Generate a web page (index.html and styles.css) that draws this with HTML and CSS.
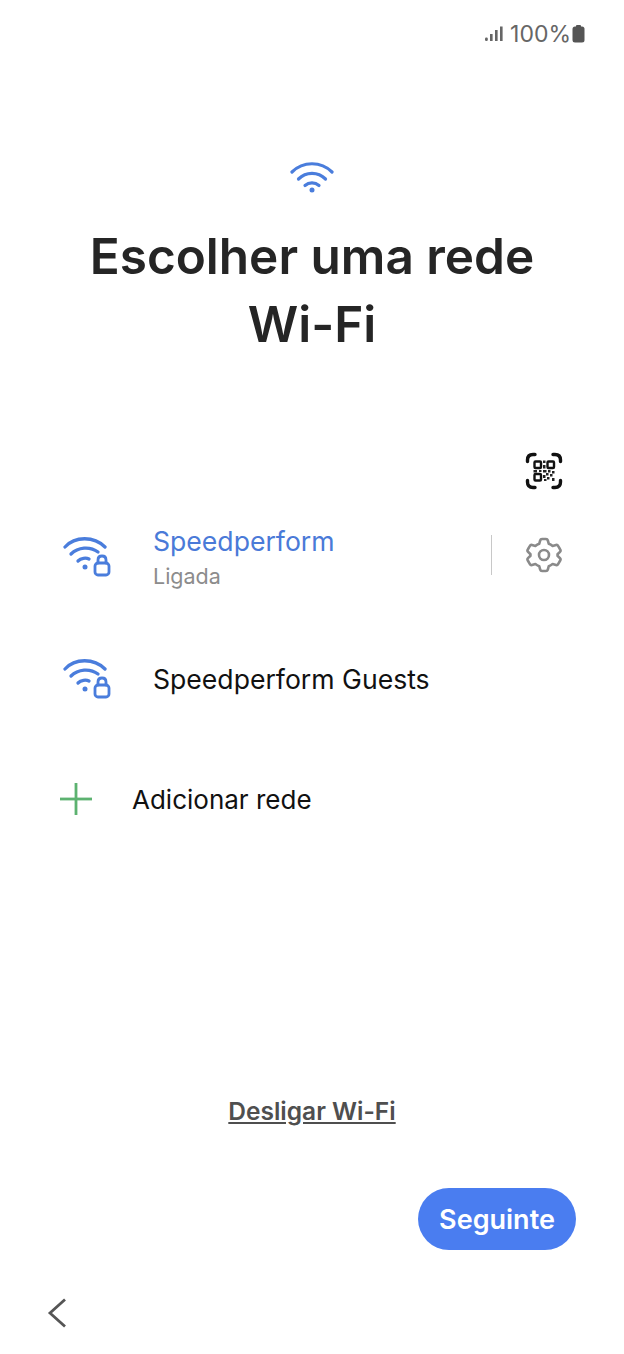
FILE: index.html
```html
<!DOCTYPE html>
<html lang="pt-BR">
<head>
  <meta charset="UTF-8">
  <title>Escolher uma rede Wi-Fi</title>
  <meta name="viewport" content="width=device-width, initial-scale=1.0">
  <link rel="stylesheet" href="styles.css">
</head>
<body>
  <div class="status">
    <svg class="signal" width="18" height="16" viewBox="0 0 18 16" fill="#666">
      <rect x="0" y="11.500" width="2.800" height="3.500" rx="1.200"/>
      <rect x="5" y="8" width="2.600" height="7"/>
      <rect x="10" y="4" width="2.600" height="11"/>
      <rect x="15" y="0.500" width="2.600" height="14.500"/>
    </svg>
    <span class="battery-text">100%</span>
    <svg class="battery" width="13" height="18" viewBox="0 0 13 18" fill="#555">
      <rect x="4" y="0" width="5" height="3" rx="1"/>
      <rect x="0.500" y="1.500" width="12" height="16" rx="2.500"/>
    </svg>
  </div>

  <main>
    <div class="top-icon">
      <svg width="44" height="34" viewBox="0 0 44 34" fill="none" stroke="#4a7ddc" stroke-width="3.200" stroke-linecap="round">
        <path d="M2 13 C13 2 31 2 42 13"/>
        <path d="M8.500 20 C16 12.500 28 12.500 35.500 20"/>
        <path d="M15 26.500 C19 23 25 23 29 26.500"/>
        <circle cx="22" cy="31" r="2.500" fill="#4a7ddc" stroke="none"/>
      </svg>
    </div>
    <h1>Escolher uma rede<br>Wi-Fi</h1>

    <div class="qr-row">
      <svg width="38" height="38" viewBox="0 0 38 38" fill="none" stroke="#111" stroke-width="3.400" stroke-linecap="round">
        <path d="M2.500 9.500 V8 Q2.500 2.500 8 2.500 H10"/>
        <path d="M28 2.500 H30 Q35.500 2.500 35.500 8 V9.500"/>
        <path d="M2.500 28.500 V30 Q2.500 35.500 8 35.500 H10"/>
        <path d="M35.500 28.500 V30 Q35.500 35.500 30 35.500 H28"/>
        <g stroke-width="2.400" stroke-linecap="butt">
          <rect x="9.500" y="9.500" width="6.500" height="6.500" rx="1"/>
          <rect x="22.500" y="9.500" width="6.500" height="6.500" rx="1"/>
          <rect x="9.500" y="22" width="6.500" height="6.500" rx="1"/>
        </g>
        <g fill="#222" stroke="none">
          <rect x="18" y="8.500" width="2.500" height="2.500"/>
          <rect x="18" y="13" width="2.500" height="3.500"/>
          <rect x="18" y="18" width="3.500" height="2.500"/>
          <rect x="8.500" y="18" width="3.500" height="2.500"/>
          <rect x="14" y="18" width="2.500" height="2"/>
          <rect x="23" y="18" width="2.500" height="2.500"/>
          <rect x="27" y="19" width="2.500" height="2.500"/>
          <rect x="21" y="21" width="2.500" height="2.500"/>
          <rect x="25" y="22" width="2.500" height="2.500"/>
          <rect x="18" y="23" width="2.500" height="3"/>
          <rect x="22" y="25" width="2.500" height="2.500"/>
          <rect x="27" y="26" width="2.500" height="3"/>
          <rect x="19" y="27" width="2.500" height="2"/>
        </g>
      </svg>
    </div>

    <div class="network connected">
      <svg class="wifi-lock" width="48" height="42" viewBox="0 0 48 42" fill="none" stroke="#4a7ddc" stroke-width="3.300" stroke-linecap="round">
        <path d="M2 12 C12 1 31 1 42 12"/>
        <path d="M8 19 C15 12 27 11 35 17"/>
        <path d="M15 26 C18 23 23 22.500 26 24"/>
        <circle cx="22" cy="32" r="2.500" fill="#4a7ddc" stroke="none"/>
        <rect x="32" y="28" width="14" height="12" rx="3" stroke-width="2.800"/>
        <path d="M35 28 V25 Q35 21 39 21 Q43 21 43 25 V28" stroke-width="2.800"/>
      </svg>
      <div class="network-text">
        <div class="network-name">Speedperform</div>
        <div class="network-state">Ligada</div>
      </div>
      <div class="divider"></div>
      <svg class="gear" width="36" height="36" viewBox="0 0 36 36" fill="none" stroke="#8a8a8a" stroke-width="2.600" stroke-linejoin="round">
        <path d="M16 2 H20 Q21.400 2 21.800 3.400 L22.800 6.800 Q24.800 7.600 26.600 9 L30 8 Q31.400 7.600 32.100 8.900 L34.200 12.500 Q35 13.800 34 14.800 L31.500 17.200 Q31.800 18 31.500 18.800 L34 21.200 Q35 22.200 34.200 23.500 L32.100 27.100 Q31.400 28.400 30 28 L26.600 27 Q24.800 28.400 22.800 29.200 L21.800 32.600 Q21.400 34 20 34 H16 Q14.600 34 14.200 32.600 L13.200 29.200 Q11.200 28.400 9.400 27 L6 28 Q4.600 28.400 3.900 27.100 L1.800 23.500 Q1 22.200 2 21.200 L4.500 18.800 Q4.200 18 4.500 17.200 L2 14.800 Q1 13.800 1.800 12.500 L3.900 8.900 Q4.600 7.600 6 8 L9.400 9 Q11.200 7.600 13.200 6.800 L14.200 3.400 Q14.600 2 16 2 Z"/>
        <circle cx="18" cy="18" r="5"/>
      </svg>
    </div>

    <div class="network">
      <svg class="wifi-lock" width="48" height="42" viewBox="0 0 48 42" fill="none" stroke="#4a7ddc" stroke-width="3.300" stroke-linecap="round">
        <path d="M2 12 C12 1 31 1 42 12"/>
        <path d="M8 19 C15 12 27 11 35 17"/>
        <path d="M15 26 C18 23 23 22.500 26 24"/>
        <circle cx="22" cy="32" r="2.500" fill="#4a7ddc" stroke="none"/>
        <rect x="32" y="28" width="14" height="12" rx="3" stroke-width="2.800"/>
        <path d="M35 28 V25 Q35 21 39 21 Q43 21 43 25 V28" stroke-width="2.800"/>
      </svg>
      <div class="network-text">
        <div class="network-name plain">Speedperform Guests</div>
      </div>
    </div>

    <div class="add-row">
      <svg width="32" height="32" viewBox="0 0 32 32" stroke="#5cb270" stroke-width="2.800">
        <path d="M16 0 V32"/>
        <path d="M0 16 H32"/>
      </svg>
      <span>Adicionar rede</span>
    </div>
  </main>

  <a class="wifi-off" href="#">Desligar Wi-Fi</a>

  <div class="actions">
    <button class="next-btn">Seguinte</button>
  </div>

  <div class="back">
    <svg width="20" height="30" viewBox="0 0 20 30" fill="none" stroke="#555" stroke-width="2.800">
      <path d="M18 1.500 L3 15 L18 28.500"/>
    </svg>
  </div>
</body>
</html>
```

FILE: styles.css
```css
* {
  box-sizing: border-box;
}

html, body {
  height: 100%;
}

body {
  margin: 0;
  background: #fff;
  color: #111;
  font-family: Inter, "Noto Sans", sans-serif;
  display: flex;
  flex-direction: column;
  height: 1354px;
  overflow: hidden;
}

.status {
  display: flex;
  align-items: center;
  justify-content: flex-end;
  height: 22px;
  margin-top: 23px;
  padding-right: 39px;
  color: #666;
  font-size: 23px;
}

.signal {
  margin-right: 7px;
}

.battery {
  margin-left: 1px;
}

main {
  flex: 1;
}

.top-icon {
  display: flex;
  justify-content: center;
  margin-top: 114px;
}

.top-icon svg {
  display: block;
}

h1 {
  margin: 29px 0 0;
  text-align: center;
  font-size: 49.5px;
  line-height: 68px;
  font-weight: 600;
  color: #252525;
}

.qr-row {
  display: flex;
  justify-content: flex-end;
  padding-right: 61px;
  margin-top: 94px;
}

.qr-row svg {
  display: block;
}

.network {
  display: flex;
  align-items: center;
  padding-left: 63px;
  padding-right: 62px;
  height: 90px;
  margin-top: 22px;
}

.network + .network {
  margin-top: 32px;
}

.wifi-lock {
  flex: none;
  margin-right: 42px;
  margin-bottom: 2px;
}

.network-text {
  flex: 1;
}

.network-name {
  font-size: 26.6px;
  color: #4a7ad8;
  line-height: 34px;
}

.network-name.plain {
  color: #111;
}

.network-state {
  font-size: 21.5px;
  color: #8c8c8c;
  line-height: 30px;
  margin-top: 3px;
}

.divider {
  width: 1px;
  height: 40px;
  background: #c8c8c8;
  margin-right: 34px;
  margin-bottom: 4px;
}

.gear {
  margin-bottom: 4px;
}

.add-row {
  display: flex;
  align-items: center;
  gap: 40px;
  padding-left: 60px;
  margin-top: 59px;
  font-size: 26px;
}

.add-row svg {
  display: block;
}

.wifi-off {
  align-self: center;
  color: #4f4f4f;
  font-size: 24.5px;
  font-weight: 600;
  line-height: 32px;
  text-decoration: underline;
}

.actions {
  display: flex;
  justify-content: flex-end;
  padding-right: 48px;
  margin-top: 61px;
}

.next-btn {
  width: 158px;
  height: 62px;
  border: none;
  border-radius: 31px;
  background: #4a7df0;
  color: #fff;
  font-family: inherit;
  font-size: 27px;
  font-weight: 600;
}

.back {
  padding-left: 47px;
  margin-top: 48px;
  height: 56px;
}

.back svg {
  display: block;
}
```
